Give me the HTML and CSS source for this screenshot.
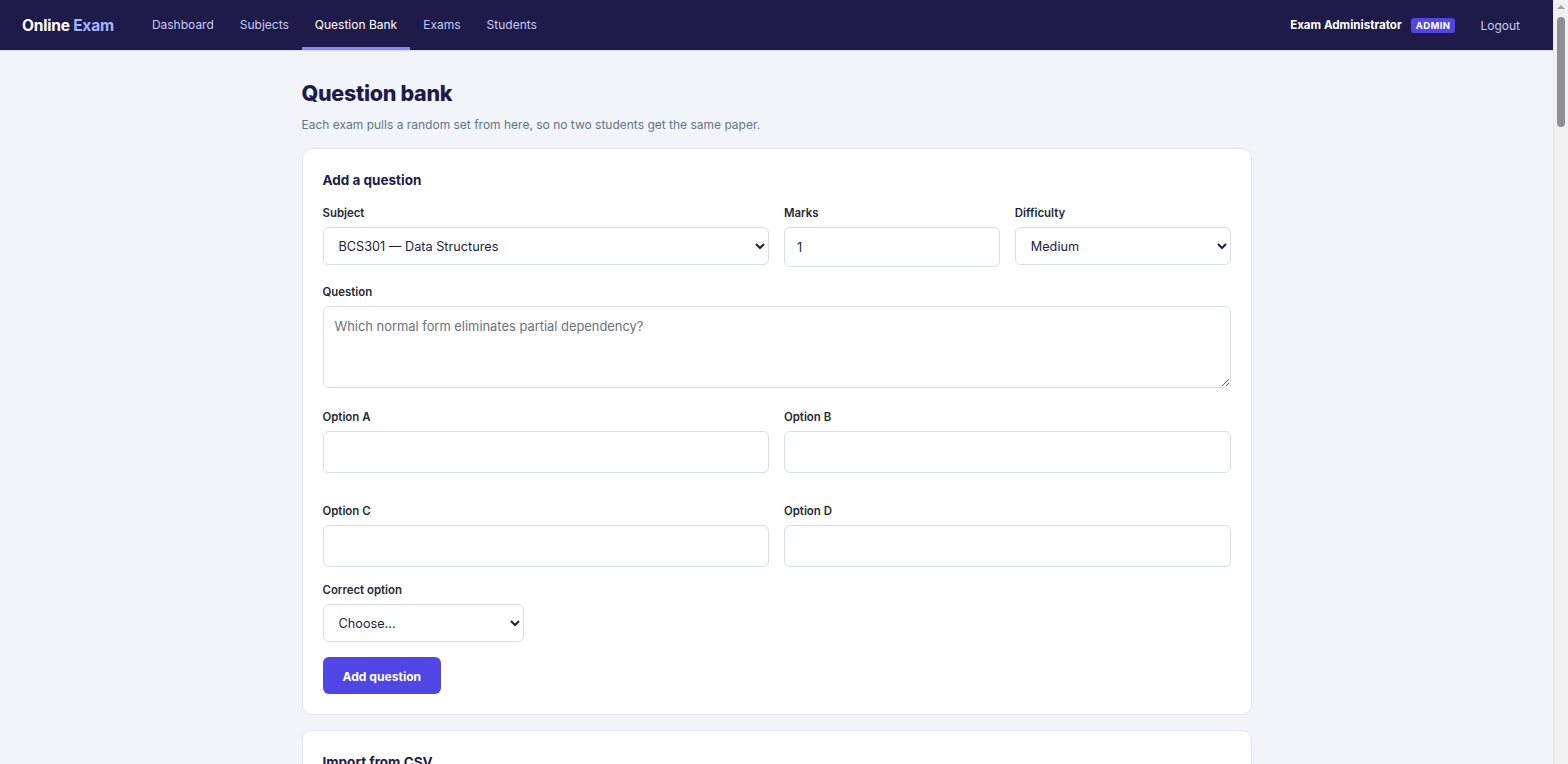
FILE: index.html
```html
<!DOCTYPE html>
<html>
  <head>
    <title>Question Bank - Online Exam</title>
    <meta charset="UTF-8" />
    <link rel="stylesheet" href="styles.css">
  </head>
  <body>
    <!-- Top navigation -->
    <div class="navbar">
      <div class="brandwrap"><a class="brand" href="#">Online <span>Exam</span></a></div>
      <div class="navlinks">
        <a href="#">Dashboard</a>
        <a href="#">Subjects</a>
        <a href="#" class="active">Question Bank</a>
        <a href="#">Exams</a>
        <a href="#">Students</a>
      </div>
      <div class="navuser">
        <span class="username">Exam Administrator</span>
        <span class="badge">ADMIN</span>
        <a href="#" class="logout">Logout</a>
      </div>
    </div>

    <div class="container">
      <h1 class="title">Question bank</h1>
      <p class="subtitle">Each exam pulls a random set from here, so no two students get the same paper.</p>

      <!-- Add question card -->
      <div class="card">
        <h3>Add a question</h3>
        <form>
          <div class="row row4">
            <div class="field span2">
              <label>Subject</label>
              <select class="input sel">
                <option>BCS301 — Data Structures</option>
              </select>
            </div>
            <div class="field">
              <label>Marks</label>
              <input class="input marks" type="number" value="1">
            </div>
            <div class="field">
              <label>Difficulty</label>
              <select class="input sel">
                <option>Medium</option>
              </select>
            </div>
          </div>

          <div class="field q">
            <label>Question</label>
            <textarea class="input area" placeholder="Which normal form eliminates partial dependency?"></textarea>
          </div>

          <div class="row row2 optA">
            <div class="field">
              <label>Option A</label>
              <input class="input opt" type="text">
            </div>
            <div class="field">
              <label>Option B</label>
              <input class="input opt" type="text">
            </div>
          </div>

          <div class="row row2 optC">
            <div class="field">
              <label>Option C</label>
              <input class="input opt" type="text">
            </div>
            <div class="field">
              <label>Option D</label>
              <input class="input opt" type="text">
            </div>
          </div>

          <div class="field correct">
            <label>Correct option</label>
            <select class="input sel small">
              <option>Choose...</option>
              <option>A</option>
              <option>B</option>
              <option>C</option>
              <option>D</option>
            </select>
          </div>

          <button type="button" class="btn">Add question</button>
        </form>
      </div>

      <!-- CSV import card -->
      <div class="card">
        <h3>Import from CSV</h3>
        <p class="hint">Columns: subject, question, option_a, option_b, option_c, option_d, correct, marks, difficulty</p>
        <input type="file">
        <br><br>
        <button type="button" class="btn">Upload</button>
      </div>
    </div>

    <!-- window scrollbar -->
    <div class="scrollbar">
      <div class="sb_arrow"></div>
      <div class="sb_thumb"></div>
    </div>
  </body>
</html>
```

FILE: styles.css
```css
  body {
    margin: 0 15px 0 0;
    background-color: #f1f4f9;
    font-family: Inter, "Noto Sans", sans-serif;
    color: #1e293b;
  }
  a {
    text-decoration: none;
  }

  /* Fake window scrollbar */
  .scrollbar {
    position: fixed;
    top: 0;
    right: 0;
    width: 15px;
    height: 100%;
    background-color: #f1f1f1;
    border-left: 1px solid #e6e6e6;
    box-sizing: border-box;
  }
  .sb_arrow {
    margin: 5px auto 0;
    width: 0;
    height: 0;
    border-left: 4px solid transparent;
    border-right: 4px solid transparent;
    border-bottom: 4px solid #a3a3a3;
  }
  .sb_thumb {
    margin: 8px auto 0;
    width: 8px;
    height: 110px;
    background-color: #8e8e93;
    border-radius: 4px;
  }

  /* Navigation bar */
  .navbar {
    display: flex;
    align-items: stretch;
    height: 50px;
    padding: 0 20px 0 22px;
    background-color: #1e1b4b;
    border-bottom: 1px solid #d6d9e6;
    box-sizing: content-box;
  }
  .brandwrap {
    line-height: 50px;
    margin-right: 25px;
  }
  .brand {
    color: #fff;
    font-weight: 700;
    font-size: 15.5px;
    letter-spacing: -0.2px;
  }
  .brand span {
    color: #a5b4fc;
  }
  .navlinks {
    display: flex;
  }
  .navlinks a {
    display: flex;
    align-items: center;
    padding: 2px 13px 0;
    color: #c7cbf2;
    font-size: 12px;
    border-bottom: 3px solid transparent;
  }
  .navlinks a.active {
    color: #fff;
    border-bottom-color: #818cf8;
  }
  .navuser {
    margin-left: auto;
    display: flex;
    align-items: center;
  }
  .username {
    color: #fff;
    font-weight: 700;
    font-size: 11.6px;
  }
  .badge {
    background-color: #4f46e5;
    color: #fff;
    font-size: 9.5px;
    font-weight: 700;
    letter-spacing: 0.4px;
    padding: 2px 5px;
    border-radius: 3px;
    margin-left: 9px;
  }
  .logout {
    color: #c7cbf2;
    font-size: 12px;
    padding: 0 13px;
    margin-left: 12px;
  }

  /* Page */
  .container {
    width: 950px;
    margin: 0 auto;
    padding-top: 27px;
  }
  .title {
    margin: 0;
    font-size: 21.5px;
    line-height: 30px;
    color: #1e1b4b;
    font-weight: 800;
    letter-spacing: -0.3px;
  }
  .subtitle {
    margin: 8px 0 14px;
    font-size: 12px;
    line-height: 18px;
    color: #64748b;
  }

  .card {
    background-color: #fff;
    border: 1px solid #e2e6ee;
    border-radius: 10px;
    padding: 21px 20px 20px;
    margin-bottom: 15px;
  }
  .card h3 {
    margin: 0 0 15px;
    font-size: 13.5px;
    line-height: 20px;
    font-weight: 700;
    color: #1e1b4b;
  }

  /* Form layout */
  .row {
    display: grid;
    gap: 15px;
  }
  .row4 {
    grid-template-columns: repeat(4, 1fr);
  }
  .row2 {
    grid-template-columns: 1fr 1fr;
  }
  .span2 {
    grid-column: span 2;
  }
  .field label {
    display: block;
    font-size: 11.4px;
    line-height: 15px;
    font-weight: 600;
    padding-top: 1px;
    margin-bottom: 6px;
    color: #1e293b;
  }
  .field.q {
    margin-top: 17px;
  }
  .optA {
    margin-top: 21px;
  }
  .optC {
    margin-top: 30px;
  }
  .field.correct {
    margin-top: 15px;
  }

  .input {
    display: block;
    width: 100%;
    box-sizing: border-box;
    border: 1px solid #d9dde5;
    border-radius: 6px;
    background-color: #fff;
    font-family: Inter, "Noto Sans", sans-serif;
    font-size: 12.7px;
    color: #1e1b4b;
    outline: none;
  }
  .sel {
    height: 38px;
    padding: 1px 10px 0 11px;
  }
  .sel.small {
    width: 201px;
  }
  .marks {
    height: 40px;
    padding: 0 12px;
  }
  .opt {
    height: 42px;
    padding: 0 12px;
  }
  .area {
    height: 82px;
    padding: 12px 11px 10px;
    font-size: 12.9px;
    resize: vertical;
  }
  .area::placeholder {
    color: #6b7280;
  }

  .btn {
    margin-top: 15px;
    background-color: #4f46e5;
    color: #fff;
    border: none;
    border-radius: 6px;
    font-family: Inter, "Noto Sans", sans-serif;
    font-size: 12.1px;
    font-weight: 700;
    height: 37px;
    padding: 2px 20px 0;
    cursor: pointer;
  }
  .btn:hover {
    background-color: #4338ca;
  }

  .hint {
    font-size: 12px;
    color: #64748b;
  }
```
